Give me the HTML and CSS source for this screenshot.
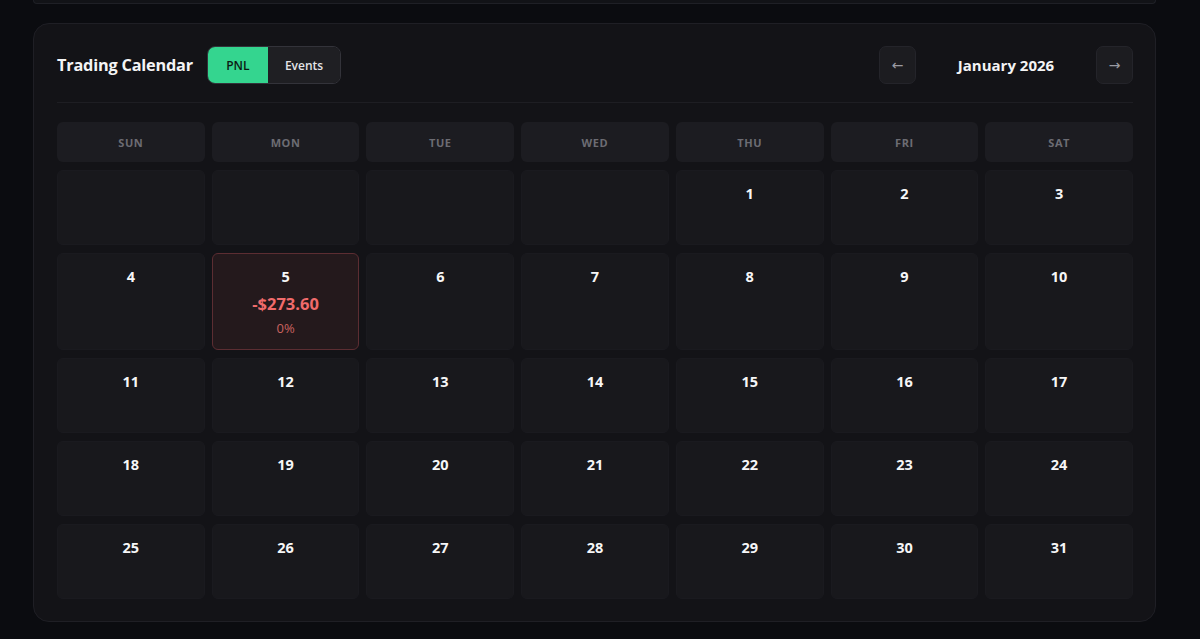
FILE: index.html
```html
<!DOCTYPE html>
<html lang="en">
<head>
    <meta charset="UTF-8">
    <meta name="viewport" content="width=device-width, initial-scale=1.0">
    <title>Trading Calendar</title>
    <link rel="stylesheet" href="styles.css">
</head>
<body>
    <div class="page">
        <div class="prev-card"></div>

        <div class="card">
            <div class="cal-header">
                <div class="cal-title-group">
                    <h2 class="cal-title">Trading Calendar</h2>
                    <div class="toggle">
                        <button class="toggle-btn active">PNL</button>
                        <button class="toggle-btn">Events</button>
                    </div>
                </div>
                <div class="cal-nav">
                    <button class="nav-btn">&larr;</button>
                    <span class="month">January 2026</span>
                    <button class="nav-btn">&rarr;</button>
                </div>
            </div>

            <div class="grid">
                <div class="dow">Sun</div>
                <div class="dow">Mon</div>
                <div class="dow">Tue</div>
                <div class="dow">Wed</div>
                <div class="dow">Thu</div>
                <div class="dow">Fri</div>
                <div class="dow">Sat</div>

                <div class="day"></div>
                <div class="day"></div>
                <div class="day"></div>
                <div class="day"></div>
                <div class="day"><span class="num">1</span></div>
                <div class="day"><span class="num">2</span></div>
                <div class="day"><span class="num">3</span></div>

                <div class="day"><span class="num">4</span></div>
                <div class="day loss">
                    <span class="num">5</span>
                    <span class="pnl">-$273.60</span>
                    <span class="pct">0%</span>
                </div>
                <div class="day"><span class="num">6</span></div>
                <div class="day"><span class="num">7</span></div>
                <div class="day"><span class="num">8</span></div>
                <div class="day"><span class="num">9</span></div>
                <div class="day"><span class="num">10</span></div>

                <div class="day"><span class="num">11</span></div>
                <div class="day"><span class="num">12</span></div>
                <div class="day"><span class="num">13</span></div>
                <div class="day"><span class="num">14</span></div>
                <div class="day"><span class="num">15</span></div>
                <div class="day"><span class="num">16</span></div>
                <div class="day"><span class="num">17</span></div>

                <div class="day"><span class="num">18</span></div>
                <div class="day"><span class="num">19</span></div>
                <div class="day"><span class="num">20</span></div>
                <div class="day"><span class="num">21</span></div>
                <div class="day"><span class="num">22</span></div>
                <div class="day"><span class="num">23</span></div>
                <div class="day"><span class="num">24</span></div>

                <div class="day"><span class="num">25</span></div>
                <div class="day"><span class="num">26</span></div>
                <div class="day"><span class="num">27</span></div>
                <div class="day"><span class="num">28</span></div>
                <div class="day"><span class="num">29</span></div>
                <div class="day"><span class="num">30</span></div>
                <div class="day"><span class="num">31</span></div>
            </div>
        </div>
    </div>
</body>
</html>
```

FILE: styles.css
```css
* { box-sizing: border-box; }
body { margin: 0; background: #0b0c10; font-family: 'Open Sans', 'Noto Sans', sans-serif; color: #f2f2f2; }
.page { width: 1123px; margin-left: 33px; }

/* tail of the card above */
.prev-card { height: 4px; border: 1px solid #1f2026; border-top: none; border-radius: 0 0 14px 14px; background: #121317; }

.card { margin-top: 19px; background: #131317; border: 1px solid #1f1f25; border-radius: 16px; padding: 22px 22px 22px 23px; }

.cal-header { display: flex; justify-content: space-between; align-items: center; padding-bottom: 18px; border-bottom: 1px solid #1e1e23; }
.cal-title-group { display: flex; align-items: center; gap: 14px; }
.cal-title { margin: 0; font-size: 16.3px; font-weight: 700; color: #f4f4f5; letter-spacing: -0.2px; }

.toggle { display: flex; border: 1px solid #33333a; border-radius: 8px; overflow: hidden; height: 38px; }
.toggle-btn { border: none; font-family: inherit; font-size: 12px; font-weight: 600; background: #1f1f23; color: #e4e4e7; padding: 0 17px; cursor: pointer; }
.toggle-btn.active { background: #34d58f; color: #0c1a13; width: 60px; padding: 0; }

.cal-nav { display: flex; align-items: center; }
.nav-btn { width: 37px; height: 38px; border: 1px solid #24242a; border-radius: 7px; background: #1c1c20; color: #9a9aa2; font-size: 14px; font-family: 'DejaVu Sans', sans-serif; cursor: pointer; padding: 0; }
.month { width: 180px; text-align: center; font-weight: 700; font-size: 15px; color: #f4f4f5; }

.grid { margin-top: 19px; display: grid; grid-template-columns: repeat(7, 1fr); grid-auto-rows: minmax(75px, auto); grid-template-rows: 40px; gap: 8px 7px; }
.dow { background: #1c1c21; border-radius: 6px; display: flex; align-items: center; justify-content: center; text-transform: uppercase; font-size: 11px; font-weight: 700; letter-spacing: 0.6px; color: #6c6c73; }

.day { background: #18181c; border: 1px solid #1a1a1f; border-radius: 6px; padding: 13px 8px 12px; display: flex; flex-direction: column; align-items: center; }
.num { font-size: 14.5px; font-weight: 700; line-height: 20px; color: #f6f6f7; }

.day.loss { background: #24191c; border-color: #5c2d32; }
.pnl { margin-top: 5px; font-size: 16.5px; font-weight: 700; line-height: 24px; color: #f06b6b; }
.pct { margin-top: 3px; font-size: 13px; line-height: 18px; color: #c9625f; }
```
